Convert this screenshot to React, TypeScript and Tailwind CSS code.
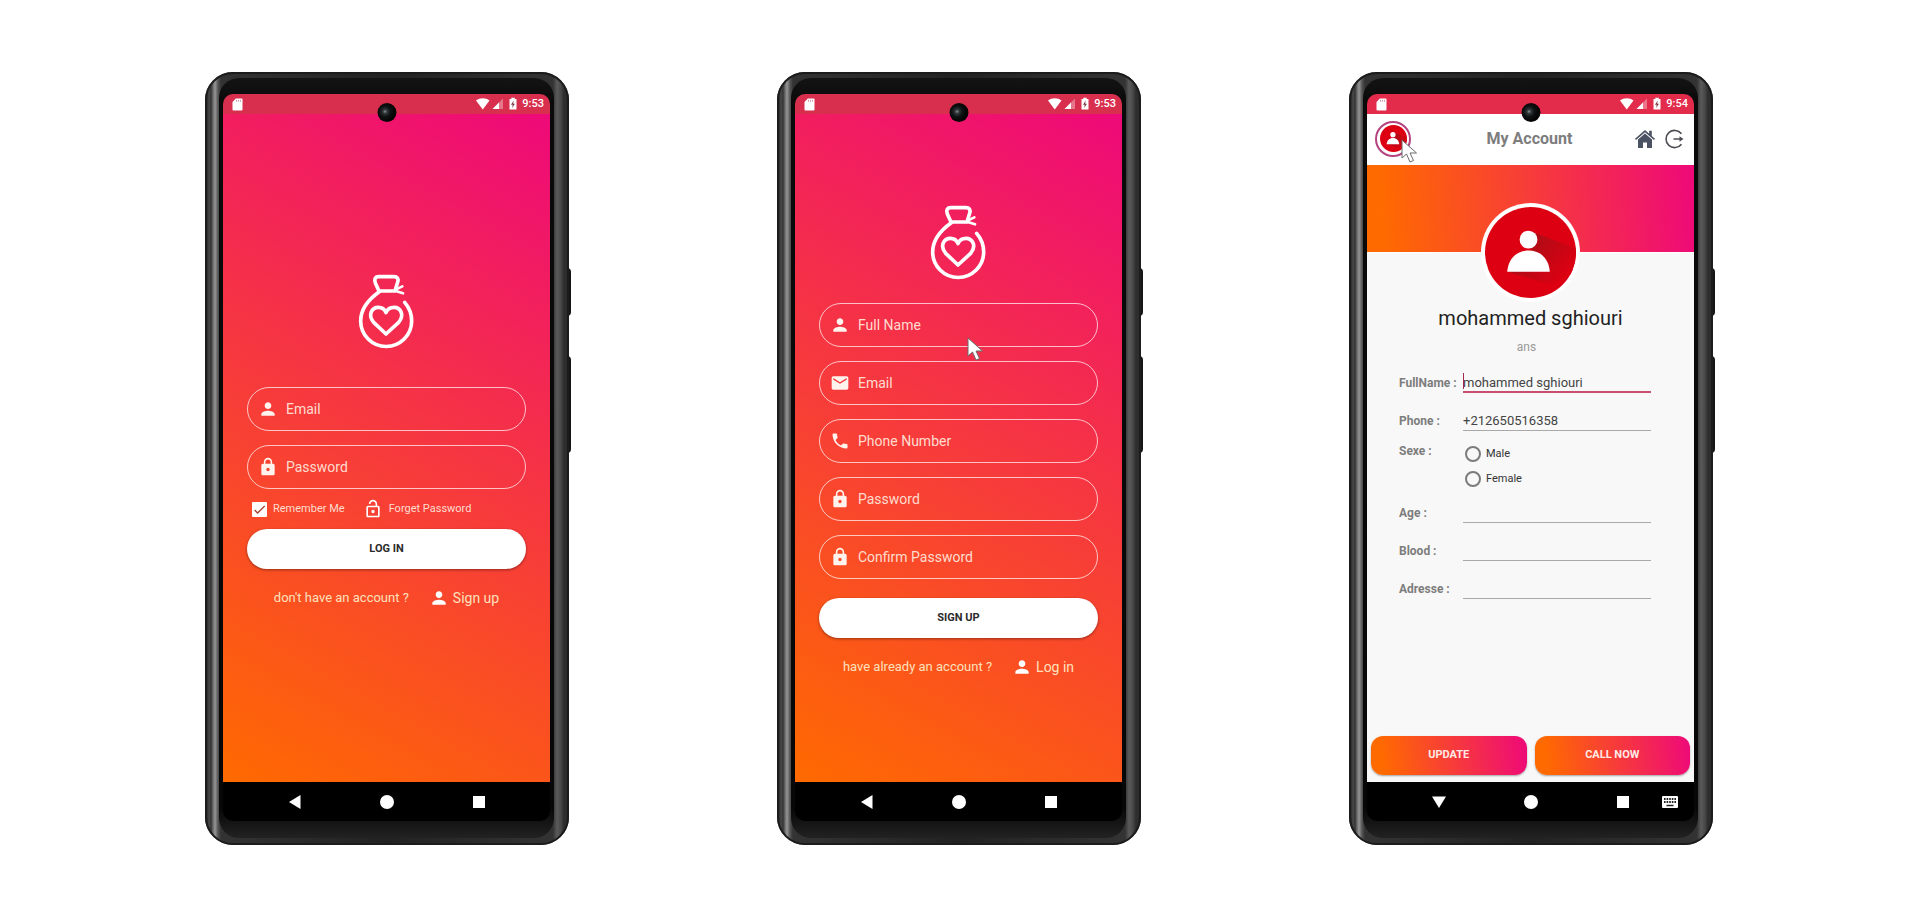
import type { ReactNode } from "react";
import {
  MdPerson,
  MdLock,
  MdLockOpen,
  MdEmail,
  MdPhone,
  MdCheck,
} from "react-icons/md";

function SignalIcons() {
  return (
    <svg width="42" height="14" viewBox="0 0 42 14" aria-hidden="true">
      <path d="M0 3.6C4 .4 9.500 .4 13.500 3.600L6.750 12.500Z" fill="#fff" />
      <path d="M27 1.500V12H16.500Z" fill="#fff" opacity=".35" />
      <path d="M23 5.500V12H16.500Z" fill="#fff" />
      <path d="M33.500 2H35.300V.8h3.400V2h1.800v10.500h-7V2Z" fill="#fff" />
      <path d="M37.700 3.500l-2.700 4.200h1.700l-.5 3.300 2.700-4.200h-1.700Z" fill="#7a3a46" />
    </svg>
  );
}

function StatusBar({ time, tone }: { time: string; tone: string }) {
  return (
    <div className={`flex h-5 items-center justify-between pr-1.5 pl-[9px] text-white ${tone}`}>
      <svg width="11" height="13" viewBox="0 0 11 13" aria-hidden="true">
        <path d="M3.800 .5H9.500Q10.500 .5 10.500 1.500V11.500Q10.500 12.500 9.500 12.500H1.500Q.5 12.500 .5 11.500V4Z" fill="#fff" />
        <path d="M4.500 1.800v2M6.500 1.800v2M8.500 1.800v2" stroke="#c98f98" strokeWidth=".9" />
      </svg>
      <div className="flex items-center gap-1">
        <SignalIcons />
        <span className="text-[11px] leading-4 font-medium">{time}</span>
      </div>
    </div>
  );
}

function NavBar({ keyboard = false }: { keyboard?: boolean }) {
  return (
    <div className="flex h-[39px] shrink-0 items-center bg-black px-4 text-white">
      <div className="flex-1" />
      <div className="flex items-center gap-[78px]">
        <button type="button" aria-label="Back" className="flex size-3.5 items-center justify-center">
          <svg width="14" height="14" viewBox="0 0 14 14" fill="currentColor">
            {keyboard ? <path d="M0 1.500h14L7 13Z" /> : <path d="M12.500 0v14L1 7Z" />}
          </svg>
        </button>
        <button type="button" aria-label="Home" className="size-3.5 rounded-full bg-white" />
        <button type="button" aria-label="Recent apps" className="flex size-3.5 items-center justify-center">
          <span className="size-3 bg-white" />
        </button>
      </div>
      <div className="flex flex-1 justify-end">
        {keyboard && (
          <button type="button" aria-label="Switch keyboard">
            <svg width="16" height="12" viewBox="0 0 16 12">
              <rect width="16" height="12" rx="1" fill="#fff" />
              <path
                d="M2 3h12M2 6h12"
                stroke="#222"
                strokeWidth="1.800"
                strokeDasharray="1.600 1"
              />
              <path d="M4.500 9.500h7" stroke="#222" strokeWidth="1.600" />
            </svg>
          </button>
        )}
      </div>
    </div>
  );
}

function Phone({
  time,
  tone,
  keyboard,
  children,
}: {
  time: string;
  tone: string;
  keyboard?: boolean;
  children: ReactNode;
}) {
  return (
    <section className="relative w-[364px] shrink-0">
      <span className="absolute top-[196px] -right-0.5 h-12 w-1 rounded-r-sm bg-[#151515]" />
      <span className="absolute top-[284px] -right-0.5 h-[97px] w-1 rounded-r-sm bg-[#151515]" />
      <div className="relative rounded-[28px] bg-[linear-gradient(90deg,#111_0px,#2a2a2a_2px,#4a4a4a_4px,#333_6px,#6a6a6a_8px,#969696_10px,#555_13px,#333_16px,#222_50%,#333_348px,#5a5a5a_352px,#484848_356px,#2c2c2c_359px,#303030_361px,#111_364px)] pt-1.5 pr-[15px] pb-[7px] pl-3.5">
        <div className="rounded-[20px] bg-[linear-gradient(180deg,#141414_0%,#0a0a0a_3%,#070707_96%,#222_100%)] px-1 pt-4 pb-[17px]">
          <div className="relative flex min-h-[727px] flex-col overflow-hidden rounded-[10px]">
            <StatusBar time={time} tone={tone} />
            <main className="flex flex-1 flex-col">{children}</main>
            <NavBar keyboard={keyboard} />
            <span className="absolute top-[9px] left-1/2 size-[19px] -translate-x-1/2 rounded-full bg-[radial-gradient(circle_at_40%_45%,#8a9094_0px,#333a3c_2px,#101415_5px,#050505_9px)]" />
          </div>
        </div>
        <div className="pointer-events-none absolute inset-0 rounded-[28px] border-2 border-[#1c1c1c]" />
      </div>
    </section>
  );
}

function BagLogo() {
  return (
    <svg
      className="h-[75px] w-[58px] self-center"
      viewBox="473 71 174 225"
      fill="none"
      stroke="#fff"
      strokeWidth="11"
      strokeLinecap="round"
      strokeLinejoin="round"
      role="img"
      aria-label="Blood donation"
    >
      <path d="M536 122L525 98Q519 79 536 79H580Q597 79 592 96L584 122Z" />
      <path d="M586 118L606 108M586 122L608 129" strokeWidth="8" />
      <path d="M537 124C503 148 481 174 481 212A76.500 76.500 0 0 0 634 212C634 190 626 171 613 156" />
      <path d="M557 251L520 216C501 193 515 171 534 171C546 171 553 177 557 187C561 177 570 171 581 171C600 171 614 193 595 216Z" />
    </svg>
  );
}

function Pointer({ className }: { className: string }) {
  return (
    <svg className={className} width="17" height="25" viewBox="0 0 17 25" aria-hidden="true">
      <path
        d="M1 1V19L5.500 15L9 23L12.500 21.500L9 14H15.500Z"
        fill="#fff"
        stroke="#6b6b6b"
        strokeWidth="1"
      />
    </svg>
  );
}

function PillField({ icon, label, type = "text" }: { icon: ReactNode; label: string; type?: string }) {
  return (
    <label className="flex h-11 items-center gap-2 rounded-full border border-white/70 px-2.5 text-white">
      <span className="text-xl text-[#fff3ee]">{icon}</span>
      <input
        type={type}
        aria-label={label}
        placeholder={label}
        className="min-w-0 flex-1 bg-transparent text-sm outline-none placeholder:text-[#ffdccf]"
      />
    </label>
  );
}

function PillButton({ children }: { children: ReactNode }) {
  return (
    <button
      type="button"
      className="h-10 rounded-full bg-white text-[11px] font-bold text-[#2a2a2a] shadow-[0_1px_3px_rgba(0,0,0,0.4)]"
    >
      {children}
    </button>
  );
}

function Switcher({ question, action }: { question: string; action: string }) {
  return (
    <p className="flex h-5 items-center justify-center gap-5 text-[13px] text-[#ffe0bd]">
      {question}
      <a href="#" className="flex items-center gap-1 text-sm">
        <MdPerson className="text-xl text-white" aria-hidden="true" />
        {action}
      </a>
    </p>
  );
}

function LoginScreen() {
  return (
    <form className="flex flex-1 flex-col bg-[linear-gradient(29deg,#ff6a00,#ee0979)] px-6 pt-40">
      <BagLogo />
      <div className="mt-[38px] flex flex-col gap-3.5">
        <PillField icon={<MdPerson />} label="Email" type="email" />
        <PillField icon={<MdLock />} label="Password" type="password" />
      </div>
      <div className="mt-2.5 flex h-5 items-center gap-[18px] pl-[5px] text-[11px] text-[#ffdccf]">
        <label className="flex items-center gap-1.5">
          <span className="relative flex size-[15px]">
            <input type="checkbox" defaultChecked className="size-[15px] appearance-none rounded-[1px] bg-white" />
            <MdCheck className="pointer-events-none absolute inset-0 size-[15px] text-[#a8402c]" />
          </span>
          Remember Me
        </label>
        <a href="#" className="flex items-center gap-1.5">
          <MdLockOpen className="text-xl text-white" aria-hidden="true" />
          Forget Password
        </a>
      </div>
      <div className="mt-2.5 mb-[19px] flex flex-col">
        <PillButton>LOG IN</PillButton>
      </div>
      <Switcher question="don't have an account ?" action="Sign up" />
    </form>
  );
}

function SignUpScreen() {
  return (
    <form className="relative flex flex-1 flex-col bg-[linear-gradient(29deg,#ff6a00,#ee0979)] px-6 pt-[91px]">
      <BagLogo />
      <div className="mt-[23px] flex flex-col gap-3.5">
        <PillField icon={<MdPerson />} label="Full Name" />
        <PillField icon={<MdEmail />} label="Email" type="email" />
        <PillField icon={<MdPhone />} label="Phone Number" type="tel" />
        <PillField icon={<MdLock />} label="Password" type="password" />
        <PillField icon={<MdLock />} label="Confirm Password" type="password" />
      </div>
      <div className="my-[19px] flex flex-col">
        <PillButton>SIGN UP</PillButton>
      </div>
      <Switcher question="have already an account ?" action="Log in" />
      <Pointer className="absolute top-[223px] left-[172px]" />
    </form>
  );
}

function Avatar({ className }: { className: string }) {
  return (
    <svg className={className} viewBox="0 0 92 92" role="img" aria-label="Profile picture">
      <defs>
        <clipPath id="avatar-disc">
          <circle cx="46" cy="46" r="46" />
        </clipPath>
        <linearGradient id="avatar-shade" x1="0" y1="0" x2="1" y2="0.6">
          <stop offset="0.3" stopColor="#ad0d16" />
          <stop offset="1" stopColor="#dc0012" />
        </linearGradient>
      </defs>
      <circle cx="46" cy="46" r="46" fill="#dc0012" />
      <g clipPath="url(#avatar-disc)">
        <path d="M50 26L92 42V66L66 78L24 66L60 60L46 42Z" fill="url(#avatar-shade)" />
      </g>
      <circle cx="44" cy="33" r="9" fill="#fff" />
      <path d="M22.500 65.500C23.500 52 32 44 44 44S64.500 52 65.500 65.500Z" fill="#fff" />
    </svg>
  );
}

function ProfileField({
  id,
  label,
  value = "",
  active = false,
}: {
  id: string;
  label: string;
  value?: string;
  active?: boolean;
}) {
  return (
    <div className="flex h-6 items-center">
      <label htmlFor={id} className="w-16 shrink-0 pt-1 text-xs font-bold whitespace-nowrap text-[#7d7d7d]">
        {label}
      </label>
      <div
        className={
          active
            ? "relative h-6 min-w-0 flex-1 border-b-2 border-[#c94f70]"
            : "relative h-6 min-w-0 flex-1 border-b border-[#a9a9a9]"
        }
      >
        {active && <span className="absolute top-1 left-0 h-4 w-px bg-[#a52a4a]" />}
        <input
          id={id}
          defaultValue={value}
          className="block h-full w-full bg-transparent pt-1 text-[13px] text-[#444] outline-none"
        />
      </div>
    </div>
  );
}

function SexOption({ label }: { label: string }) {
  return (
    <label className="flex h-4 items-center gap-[5px] text-[11px] text-[#333]">
      <input
        type="radio"
        name="sexe"
        className="size-4 appearance-none rounded-full border-2 border-[#7b7b7b] checked:bg-[#7b7b7b]"
      />
      {label}
    </label>
  );
}

function AccountScreen() {
  return (
    <div className="flex flex-1 flex-col bg-[#f8f8f8]">
      <header className="relative flex h-[51px] items-center justify-between bg-white pr-2.5 pb-0.5 pl-2">
        <div className="flex flex-1">
          <span className="flex size-9 items-center justify-center rounded-full border-2 border-[#b5437f] bg-white">
            <Avatar className="size-[27px]" />
          </span>
        </div>
        <h1 className="text-base font-bold text-[#7d7d7d]">My Account</h1>
        <div className="flex flex-1 items-center justify-end gap-2.5">
          <button type="button" aria-label="Home">
            <svg width="20" height="20" viewBox="0 0 20 20" fill="#4b5264">
              <path d="M10 1L0 9.800L1 11L10 3.200L19 11L20 9.800L16.800 7V1.800H14.200V4.700Z" />
              <path d="M10 4.400L3 10.600V19H8V13.500H12V19H17V10.600Z" />
            </svg>
          </button>
          <button type="button" aria-label="Log out">
            <svg width="19" height="20" viewBox="0 0 19 20" fill="none" stroke="#4d4d55" strokeWidth="1.600">
              <path d="M16.500 4.800A8.600 8.600 0 1 0 16.500 15.200" />
              <path d="M8.500 10H17" />
              <path d="M14.500 7.200L18.500 10L14.500 12.800Z" fill="#4d4d55" stroke="none" />
            </svg>
          </button>
        </div>
        <Pointer className="absolute top-[25px] left-[34px]" />
      </header>
      <div className="flex h-[88px] justify-center border-b border-white bg-[linear-gradient(86deg,#ff6a00_5%,#ee0979)] pt-[38px]">
        <div className="relative size-[99px] shrink-0 rounded-full bg-white p-1">
          <Avatar className="size-[91px]" />
        </div>
      </div>
      <h2 className="mt-[51px] text-center text-xl leading-7 text-[#222]">mohammed sghiouri</h2>
      <p className="mt-[7px] pr-2 text-center text-xs leading-4 text-[#9a9a9a]">ans</p>
      <form className="mt-3.5 flex flex-col gap-3.5 pr-[43px] pl-8">
        <ProfileField id="fullname" label="FullName :" value="mohammed sghiouri" active />
        <ProfileField id="phone" label="Phone :" value="+212650516358" />
        <fieldset className="flex h-10 items-start">
          <legend className="float-left w-16 text-xs leading-3 font-bold text-[#7d7d7d]">Sexe :</legend>
          <div className="flex flex-col gap-[9px] pt-px pl-0.5">
            <SexOption label="Male" />
            <SexOption label="Female" />
          </div>
        </fieldset>
        <ProfileField id="age" label="Age :" />
        <ProfileField id="blood" label="Blood :" />
        <ProfileField id="adresse" label="Adresse :" />
      </form>
      <div className="mt-auto flex gap-2 px-1 pb-[7px]">
        {["UPDATE", "CALL NOW"].map((name) => (
          <button
            key={name}
            type="button"
            className="h-[39px] flex-1 rounded-xl bg-[linear-gradient(82deg,#ff6a00_8%,#ee0979)] text-[11px] font-bold text-[#ffe9e4] shadow-[0_1px_2px_rgba(0,0,0,0.35)]"
          >
            {name}
          </button>
        ))}
      </div>
    </div>
  );
}

export default function App() {
  return (
    <div className="flex min-h-screen items-start justify-between bg-white pt-[72px] pr-[207px] pb-[72px] pl-[205px] font-['Roboto',sans-serif]">
      <Phone time="9:53" tone="bg-[#d92f4e]">
        <LoginScreen />
      </Phone>
      <Phone time="9:53" tone="bg-[#d92f4e]">
        <SignUpScreen />
      </Phone>
      <Phone time="9:54" tone="bg-[#e32b4b]" keyboard>
        <AccountScreen />
      </Phone>
    </div>
  );
}
